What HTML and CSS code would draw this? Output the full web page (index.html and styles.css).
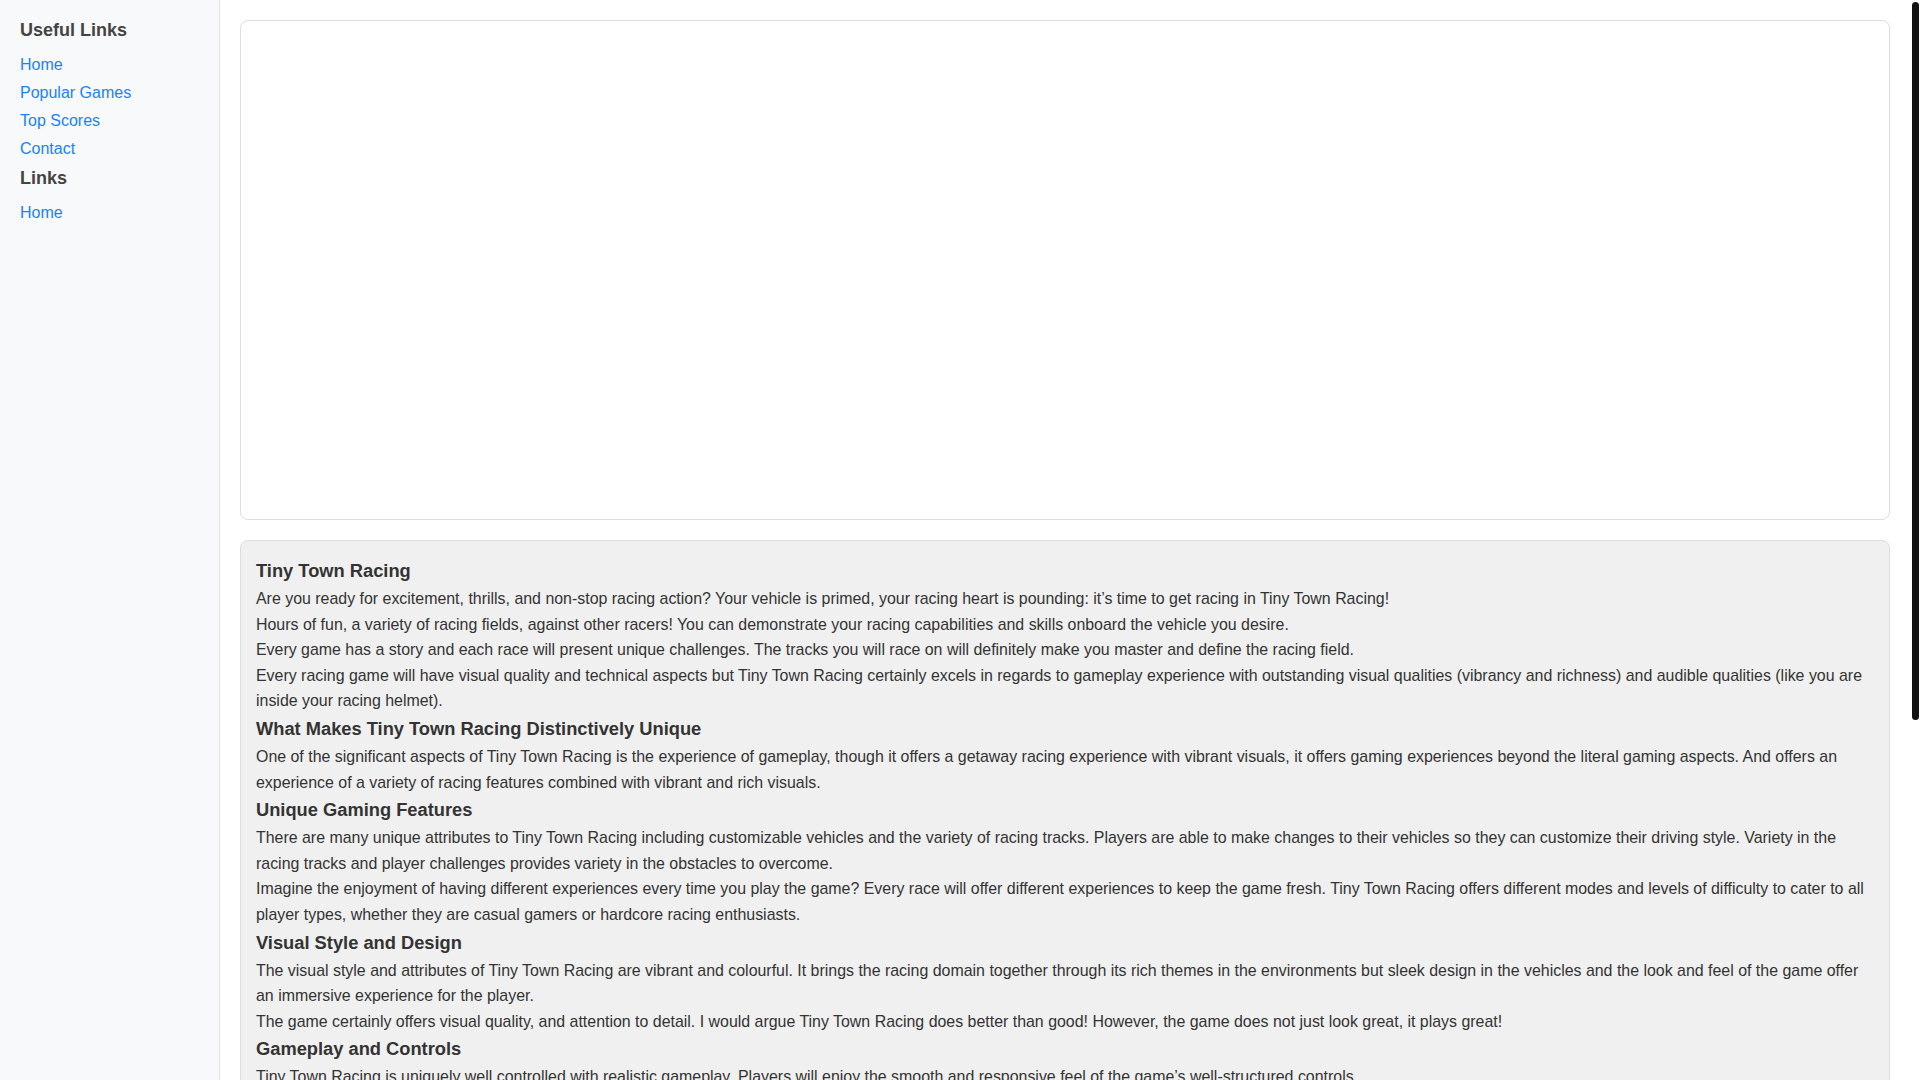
FILE: index.html
```html
<!DOCTYPE html>
<html lang="en">
<head>
<meta charset="utf-8">
<title>Tiny Town Racing</title>
<link rel="stylesheet" href="styles.css">
</head>
<body>
<div class="layout">
  <aside class="sidebar">
    <h3 class="side-title">Useful Links</h3>
    <nav class="side-nav">
      <a href="#">Home</a>
      <a href="#">Popular Games</a>
      <a href="#">Top Scores</a>
      <a href="#">Contact</a>
    </nav>
    <h3 class="side-title side-title-next">Links</h3>
    <nav class="side-nav">
      <a href="#">Home</a>
    </nav>
  </aside>
  <main class="main">
    <div class="game-frame"></div>
    <section class="info">
      <h2>Tiny Town Racing</h2>
      <p>Are you ready for excitement, thrills, and non-stop racing action? Your vehicle is primed, your racing heart is pounding: it’s time to get racing in Tiny Town Racing!</p>
      <p>Hours of fun, a variety of racing fields, against other racers! You can demonstrate your racing capabilities and skills onboard the vehicle you desire.</p>
      <p>Every game has a story and each race will present unique challenges. The tracks you will race on will definitely make you master and define the racing field.</p>
      <p>Every racing game will have visual quality and technical aspects but Tiny Town Racing certainly excels in regards to gameplay experience with outstanding visual qualities (vibrancy and richness) and audible qualities (like you are inside your racing helmet).</p>
      <h2>What Makes Tiny Town Racing Distinctively Unique</h2>
      <p>One of the significant aspects of Tiny Town Racing is the experience of gameplay, though it offers a getaway racing experience with vibrant visuals, it offers gaming experiences beyond the literal gaming aspects. And offers an experience of a variety of racing features combined with vibrant and rich visuals.</p>
      <h2>Unique Gaming Features</h2>
      <p>There are many unique attributes to Tiny Town Racing including customizable vehicles and the variety of racing tracks. Players are able to make changes to their vehicles so they can customize their driving style. Variety in the racing tracks and player challenges provides variety in the obstacles to overcome.</p>
      <p>Imagine the enjoyment of having different experiences every time you play the game? Every race will offer different experiences to keep the game fresh. Tiny Town Racing offers different modes and levels of difficulty to cater to all player types, whether they are casual gamers or hardcore racing enthusiasts.</p>
      <h2>Visual Style and Design</h2>
      <p>The visual style and attributes of Tiny Town Racing are vibrant and colourful. It brings the racing domain together through its rich themes in the environments but sleek design in the vehicles and the look and feel of the game offer an immersive experience for the player.</p>
      <p>The game certainly offers visual quality, and attention to detail. I would argue Tiny Town Racing does better than good! However, the game does not just look great, it plays great!</p>
      <h2>Gameplay and Controls</h2>
      <p>Tiny Town Racing is uniquely well controlled with realistic gameplay. Players will enjoy the smooth and responsive feel of the game’s well-structured controls.</p>
      <p>Whether you are drifting around tight corners or speeding down long straights, the controls respond instantly to every input, giving you full command of your vehicle. Beginners can pick it up within minutes, while experienced racers will find plenty of depth to master.</p>
      <h2>Tracks and Environments</h2>
      <p>From quiet suburban streets to busy downtown avenues, every track in Tiny Town Racing has its own personality. Shortcuts, ramps and hidden paths reward players who take the time to explore each course and learn all of its many secrets.</p>
      <p>Each environment is packed with small details that bring the tiny town to life, making every lap feel fresh and exciting.</p>
      <h2>Final Thoughts</h2>
      <p>Tiny Town Racing combines fun, speed and style in one exciting package. It is the perfect choice for anyone looking for a racing game that is easy to learn, hard to put down and full of surprises around every corner.</p>
    </section>
  </main>
  <div class="rail" aria-hidden="true"><div class="rail-thumb"></div></div>
</div>
</body>
</html>
```

FILE: styles.css
```css
html, body {
  margin: 0;
  padding: 0;
  height: 100%;
  overflow: hidden;
}

body {
  font-family: "Liberation Sans", Arial, Helvetica, sans-serif;
  font-size: 16px;
  color: #333333;
  background: #ffffff;
}

.layout {
  display: flex;
  height: 100vh;
}

.sidebar {
  flex: 0 0 220px;
  box-sizing: border-box;
  padding: 20px;
  background: #f8f9fa;
  border-right: 1px solid #dee2e6;
  overflow: hidden;
}

.side-title {
  margin: 0 0 10px;
  font-size: 18px;
  font-weight: bold;
  line-height: normal;
  color: #444444;
}

.side-title-next {
  margin-top: 5px;
}

.side-nav {
  display: flex;
  flex-direction: column;
}

.side-nav a {
  display: block;
  padding: 1.15px 0;
  line-height: 25.6px;
  font-size: 16px;
  color: #1a82f7;
  text-decoration: none;
}

.main {
  flex: 1 1 auto;
  min-width: 0;
  padding: 20px;
  overflow: hidden;
}

.rail {
  flex: 0 0 10px;
  background: #ffffff;
}

.rail-thumb {
  width: 7px;
  height: 718px;
  margin: 2px auto 0;
  background: #121212;
  border-radius: 4px;
}

.game-frame {
  box-sizing: border-box;
  height: 500px;
  background: #ffffff;
  border: 1px solid #dddddd;
  border-radius: 8px;
}

.info {
  margin-top: 20px;
  padding: 15px;
  background: #f0f0f0;
  border: 1px solid #dddddd;
  border-radius: 8px;
}

.info h2 {
  margin: 0;
  font-size: 18.3px;
  font-weight: bold;
  line-height: 30px;
  color: #333333;
}

.info p {
  margin: 0;
  font-size: 15.93px;
  line-height: 25.6px;
}
```
